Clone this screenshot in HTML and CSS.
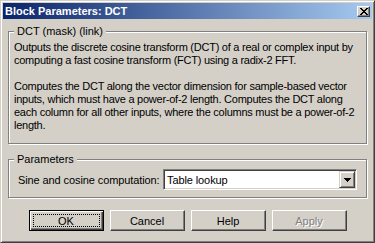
FILE: index.html
```html
<!DOCTYPE html>
<html lang="en">
<head>
<meta charset="UTF-8">
<meta name="viewport" content="width=device-width, initial-scale=1.0">
<title>Block Parameters: DCT</title>
<link rel="stylesheet" href="styles.css">
</head>
<body>
<div class="window">
  <div class="titlebar">
    <span class="title">Block Parameters: DCT</span>
    <span class="close-btn">
      <svg width="8" height="7" viewBox="0 0 8 7" shape-rendering="crispEdges">
        <path d="M0 0h2v1h-2z M6 0h2v1h-2z M1 1h2v1h-2z M5 1h2v1h-2z M2 2h4v1h-4z M3 3h2v1h-2z M2 4h4v1h-4z M1 5h2v1h-2z M5 5h2v1h-2z M0 6h2v1h-2z M6 6h2v1h-2z" fill="#000"/>
      </svg>
    </span>
  </div>

  <div class="dialog">
    <fieldset class="group group-desc">
      <legend>DCT (mask) (link)</legend>
      <p>Outputs the discrete cosine transform (DCT) of a real or complex input by<br>computing a fast cosine transform (FCT) using a radix-2 FFT.</p>
      <p>Computes the DCT along the vector dimension for sample-based vector<br>inputs, which must have a power-of-2 length. Computes the DCT along<br>each column for all other inputs, where the columns must be a power-of-2<br>length.</p>
    </fieldset>

    <fieldset class="group group-params">
      <legend>Parameters</legend>
      <div class="param-row">
        <label for="sincos">Sine and cosine computation:</label>
        <div class="combo" id="sincos">
          <span class="combo-value">Table lookup</span>
          <span class="combo-btn">
            <svg width="7" height="4" viewBox="0 0 7 4" shape-rendering="crispEdges">
              <path d="M0 0h7v1h-1v1h-1v1h-1v1h-1v-1h-1v-1h-1v-1h-1z" fill="#000"/>
            </svg>
          </span>
        </div>
      </div>
    </fieldset>

    <div class="buttons">
      <button class="btn btn-default"><span class="focus">OK</span></button>
      <button class="btn">Cancel</button>
      <button class="btn">Help</button>
      <button class="btn" disabled>Apply</button>
    </div>
  </div>
</div>
</body>
</html>
```

FILE: styles.css
```css
body {
  margin: 0;
  background-color: #d4d0c8;
  font-family: "Liberation Sans", Arial, sans-serif;
  font-size: 11px;
  color: #000;
}

.window {
  box-sizing: border-box;
  width: 375px;
  height: 243px;
  padding: 2px;
  background-color: #d4d0c8;
  border: 1px solid;
  border-color: #d4d0c8 #404040 #404040 #d4d0c8;
  box-shadow: inset 1px 1px #fff, inset -1px -1px #808080;
}

/* caption */
.titlebar {
  display: flex;
  align-items: center;
  height: 16px;
  padding: 0 2px 0 2px;
  background: linear-gradient(to right, #0a246a, #a6caf0);
}

.title {
  flex: 1;
  color: #fff;
  font-weight: bold;
  line-height: 13px;
}

.close-btn {
  box-sizing: border-box;
  display: flex;
  align-items: center;
  justify-content: center;
  width: 13px;
  height: 11px;
  background-color: #d4d0c8;
  border: 1px solid;
  border-color: #fff #404040 #404040 #fff;
  box-shadow: inset -1px -1px #808080;
}

/* dialog body */
.dialog {
  padding: 6px 5px 0;
}

.group {
  margin: 0;
  min-width: 0;
  border: 1px solid #808080;
  box-shadow: inset 1px 1px #fff, 1px 1px #fff;
}

.group legend {
  padding: 0 3px;
  line-height: 13px;
  background-color: #d4d0c8;
}

.group-desc {
  padding: 3px 5px 11px;
}

.group-desc p {
  margin: 0;
  line-height: 13px;
  letter-spacing: -0.25px;
  white-space: nowrap;
}

.group-desc p + p {
  margin-top: 13px;
}

.group-params {
  margin-top: 9px;
  padding: 3px 9px 7px 5px;
}

.param-row {
  display: flex;
  align-items: center;
  padding-left: 4px;
  letter-spacing: -0.1px;
}

.combo {
  box-sizing: border-box;
  display: flex;
  align-items: center;
  width: 194px;
  height: 21px;
  margin-left: auto;
  padding: 1px;
  background-color: #fff;
  border: 1px solid;
  border-color: #808080 #fff #fff #808080;
  box-shadow: inset 1px 1px #404040, inset -1px -1px #d4d0c8;
}

.combo-value {
  flex: 1;
  padding-left: 2px;
}

.combo-btn {
  box-sizing: border-box;
  display: flex;
  align-items: center;
  justify-content: center;
  width: 16px;
  height: 17px;
  background-color: #d4d0c8;
  border: 1px solid;
  border-color: #d4d0c8 #404040 #404040 #d4d0c8;
  box-shadow: inset 1px 1px #fff, inset -1px -1px #808080;
}

/* push buttons */
.buttons {
  display: flex;
  justify-content: center;
  gap: 6px;
  margin-top: 12px;
}

.btn {
  box-sizing: border-box;
  appearance: none;
  width: 75px;
  height: 21px;
  padding: 0;
  margin: 0;
  font: inherit;
  color: #000;
  background-color: #d4d0c8;
  border: 1px solid;
  border-color: #fff #404040 #404040 #fff;
  box-shadow: inset -1px -1px #808080;
}

.btn-default {
  display: flex;
  padding: 3px;
  border-color: #000;
  box-shadow: inset 1px 1px #fff, inset -1px -1px #404040, inset -2px -2px #808080;
}

.btn-default .focus {
  flex: 1;
  display: flex;
  align-items: center;
  justify-content: center;
  border: 1px dotted #000;
}

.btn:disabled {
  color: #808080;
  text-shadow: 1px 1px #fff;
}
```
